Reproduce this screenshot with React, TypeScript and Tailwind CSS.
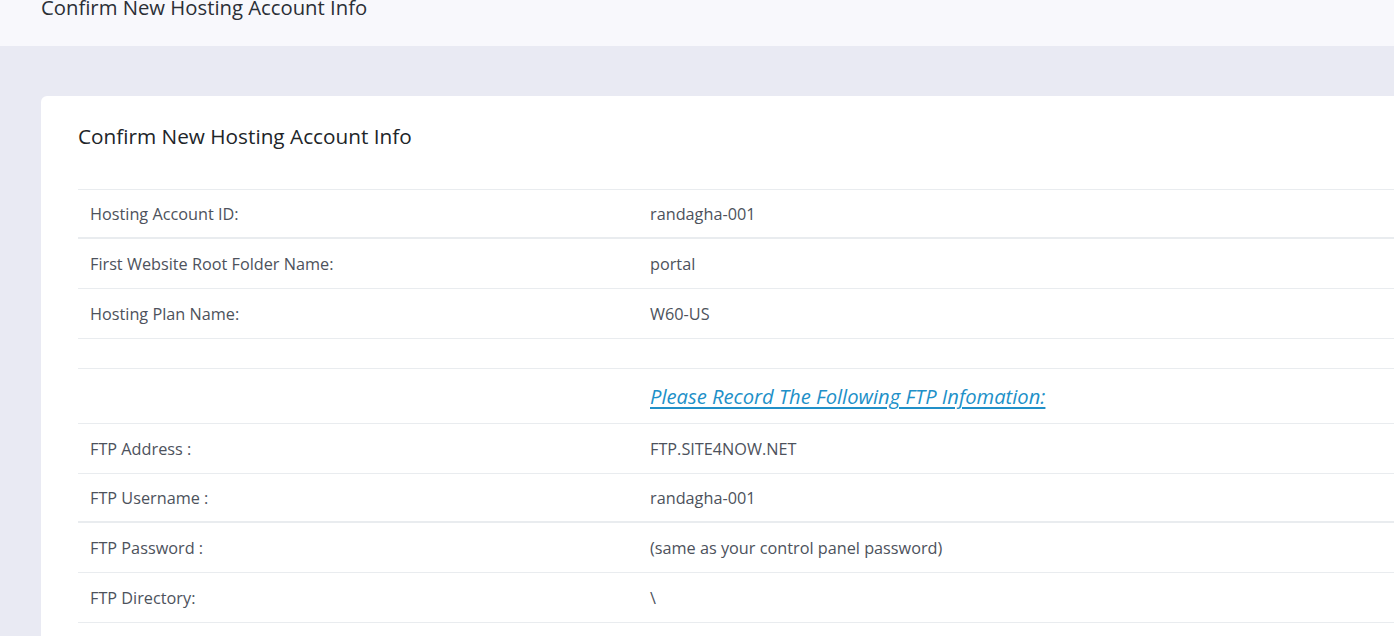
import React from "react";

const rows1 = [
  ["Hosting Account ID:", "randagha-001", "border-b-2 h-[49px]"],
  ["First Website Root Folder Name:", "portal", "border-b h-[50px]"],
  ["Hosting Plan Name:", "W60-US", "border-b h-[50px]"],
];
const rows2 = [
  ["FTP Address :", "FTP.SITE4NOW.NET", "border-b h-[50px]"],
  ["FTP Username :", "randagha-001", "border-b-2 h-[49px]"],
  ["FTP Password :", "(same as your control panel password)", "border-b h-[50px]"],
  ["FTP Directory:", "\\", "border-b h-[50px]"],
];

function Row({ l, v, b }: { l: string; v: string; b: string }) {
  return (
    <div className={`flex items-center pt-[2px] ${b} border-[#e9ecef] text-[16.25px] text-[#4d525c]`}>
      <div className="w-[560px] shrink-0 pl-3">{l}</div>
      <div className="pl-3">{v}</div>
    </div>
  );
}

export default function App() {
  return (
    <div
      className="min-h-[636px] w-[1394px] overflow-hidden bg-[#e9eaf3]"
      style={{ fontFamily: '"Open Sans", "Liberation Sans", sans-serif' }}
    >
      <div className="flex h-[46px] items-start bg-[#f8f8fc] pl-[41px]">
        <div className="mt-[-8px] text-[20.3px] leading-[30px] text-[#2b2f36]">Confirm New Hosting Account Info</div>
      </div>
      <div className="pl-[41px] pt-[50px]">
        <div className="w-[1400px] rounded-tl-[6px] bg-white pl-[37px] pt-[22px]">
          <h2 className="h-[71px] text-[20.75px] leading-[36px] text-[#212529]">Confirm New Hosting Account Info</h2>
          <div className="border-t border-[#e9ecef]">
            {rows1.map(([l, v, b]) => (
              <Row key={l} l={l} v={v} b={b} />
            ))}
            <div className="h-[30px] border-b border-[#e9ecef]" />
            <div className="flex h-[55px] items-center border-b border-[#e9ecef]">
              <div className="w-[560px] shrink-0" />
              <a className="pl-3 text-[20.2px] italic text-[#2190c8] underline underline-offset-[3px]" href="#">
                Please Record The Following FTP Infomation:
              </a>
            </div>
            {rows2.map(([l, v, b]) => (
              <Row key={l} l={l} v={v} b={b} />
            ))}
            <div className="h-[20px]" />
          </div>
        </div>
      </div>
    </div>
  );
}
